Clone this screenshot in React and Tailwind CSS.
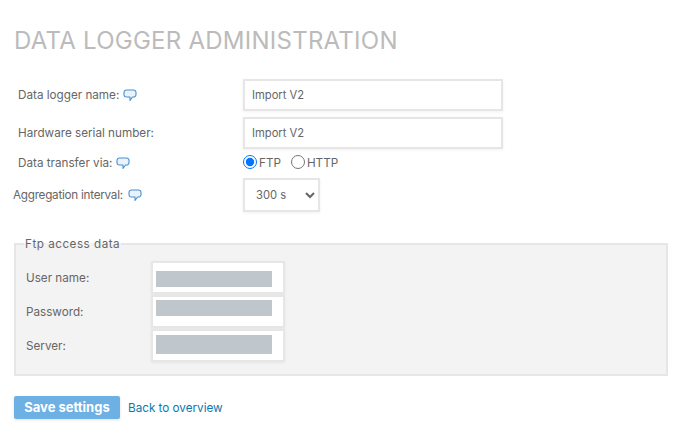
import React from 'react';

const inputCls = 'block border-2 border-[#e6e6e6] bg-white shadow-[0_1px_3px_rgba(0,0,0,0.06)] outline-none';

// speech bubble next to labels
const Bubble = ({ className = 'ml-[4px]' }) => (
  <svg width="14" height="13" viewBox="0 0 14 13" className={`inline-block shrink-0 ${className}`}>
    <path
      d="M3.500 1h7A2.500 2.500 0 0 1 13 3.500v2A2.500 2.500 0 0 1 10.500 8H9.500L7 11.500V8H3.500A2.500 2.500 0 0 1 1 5.500v-2A2.500 2.500 0 0 1 3.500 1z"
      fill="#eaf3fb"
      stroke="#4a90d0"
      strokeWidth="1.100"
      strokeLinejoin="round"
    />
  </svg>
);

const FtpRow = ({ label, barCls, rowCls }) => (
  <div className={`flex items-center ${rowCls}`}>
    <div className="w-[125px] shrink-0 pt-[2px]">{label}</div>
    <div className={`${inputCls} w-[134px] h-[33px] pl-[3px]`}>
      <div className={`w-[116px] bg-[#bfc7cd] ${barCls}`} />
    </div>
  </div>
);

export default function App() {
  return (
    <div className="w-[674px] h-[436px] overflow-hidden bg-white pl-[14px] pt-[26px] font-['Inter',sans-serif] text-[11.7px] text-[#666]">
      <h1 className="text-[24px] leading-[29px] font-normal text-[#bbbbbb] tracking-[0.25px]">DATA LOGGER ADMINISTRATION</h1>

      <div className="mt-[24px] flex items-center h-[32px]">
        <div className="w-[229px] pl-[4px] pt-[1px] flex items-center">Data logger name:<Bubble /></div>
        <input readOnly value="Import V2" className={`${inputCls} w-[260px] h-[32px] px-[7px] text-[11.200px] text-[#666]`} />
      </div>
      <div className="mt-[6px] flex items-center h-[32px]">
        <div className="w-[229px] pl-[4px] pt-[1px]">Hardware serial number:</div>
        <input readOnly value="Import V2" className={`${inputCls} w-[260px] h-[32px] px-[7px] text-[11.200px] text-[#666]`} />
      </div>
      <div className="mt-[4px] flex items-center h-[20px]">
        <div className="w-[229px] pl-[4px] pt-[1px] flex items-center">Data transfer via:<Bubble /></div>
        <input type="radio" name="via" defaultChecked className="w-[14px] h-[14px] m-0 mb-[2px] accent-[#0075ff]" />
        <span className="ml-[2px] pt-[1px]">FTP</span>
        <input type="radio" name="via" className="w-[14px] h-[14px] m-0 mb-[2px] ml-[10px]" />
        <span className="ml-[2px] pt-[1px]">HTTP</span>
      </div>
      <div className="mt-[5px] flex items-center h-[34px]">
        <div className="w-[229px] -ml-[1px] mr-[1px] pt-[1px] flex items-center tracking-[-0.25px]">Aggregation interval:<Bubble className="ml-[5px]" /></div>
        <select className={`${inputCls} w-[77px] h-[34px] pl-[7px] text-[11.200px] text-[#666]`} defaultValue="300">
          <option value="300">300 s</option>
        </select>
      </div>

      <fieldset className="mt-[25px] w-[654px] h-[139px] border-2 border-[#e6e6e6] bg-[#f3f3f3] pl-[10px]">
        <legend className="-ml-[2px] px-[1px] leading-[14px] tracking-[0.5px]">Ftp access data</legend>
        <FtpRow label="User name:" barCls="h-[16px] mt-[8px]" rowCls="mt-[10px]" />
        <FtpRow label="Password:" barCls="h-[16px] mt-[3px]" rowCls="mt-[1px]" />
        <FtpRow label="Server:" barCls="h-[19px] mt-[4px]" rowCls="mt-[1px]" />
      </fieldset>

      <div className="mt-[20px] flex items-center">
        <button className="w-[106px] h-[23px] pt-[1px] rounded-[2px] bg-[#6cb0e4] text-[13px] font-bold text-white shadow-[0_1px_3px_rgba(0,0,0,0.12)]">Save settings</button>
        <a href="#" className="ml-[8px] pt-[3px] text-[#0a78b0]">Back to overview</a>
      </div>
    </div>
  );
}
